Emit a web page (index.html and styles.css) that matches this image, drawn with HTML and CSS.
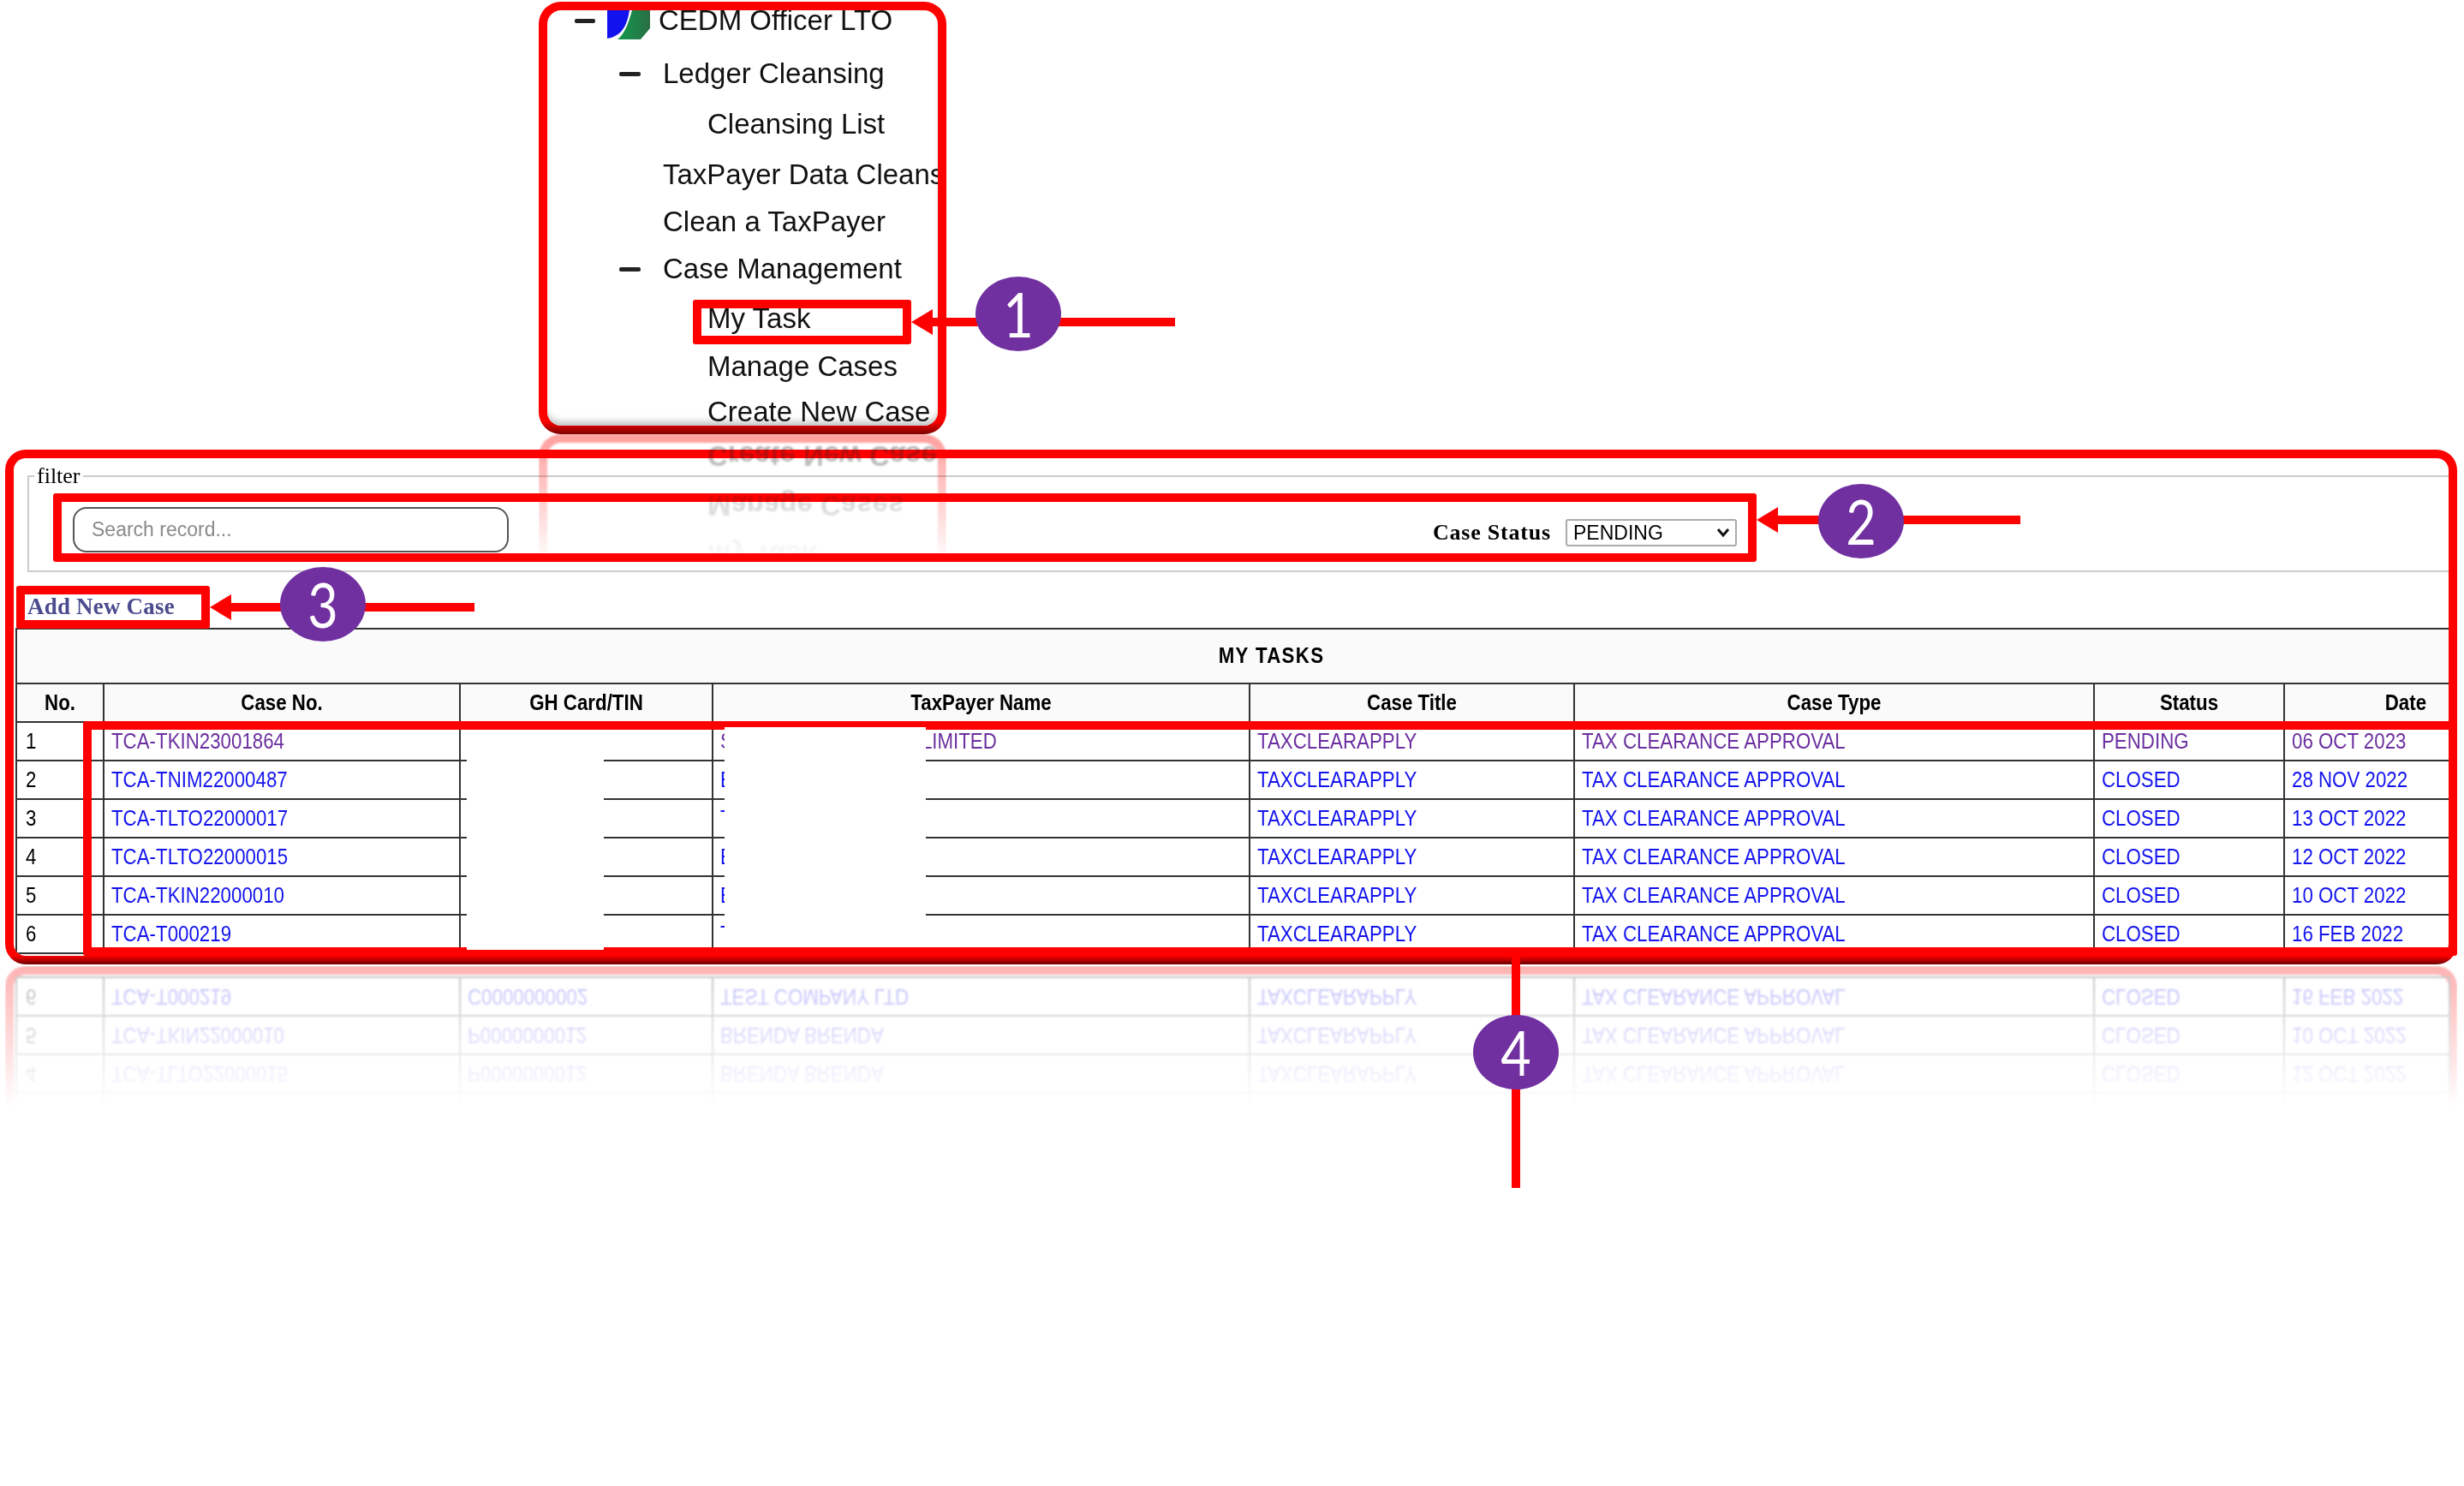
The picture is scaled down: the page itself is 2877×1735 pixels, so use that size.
FILE: index.html
```html
<!DOCTYPE html>
<html lang="en">
<head>
    <meta charset="UTF-8">
    <title>My Tasks</title>
    <link rel="stylesheet" href="styles.css">
</head>
<body>
<div class="stage">
    <div class="menu">
        <ul class="menu-inner">
            <li class="level-0">
                <span class="dash dash-0"></span>
                <svg class="logo" viewBox="0 0 50 35">
                    <defs>
                        <linearGradient id="logo-green" x1="0" y1="0" x2="1" y2="0">
                            <stop offset="0" stop-color="#0f9a4c"/>
                            <stop offset="1" stop-color="#2b6e45"/>
                        </linearGradient>
                    </defs>
                    <path d="M0 0H26C24 12 20 30 0 33Z" fill="#1212ee"/>
                    <path d="M29 0H50V21L39 34H12C20 28 25 15 29 0Z" fill="url(#logo-green)"/>
                </svg>
                CEDM Officer LTO
            </li>
            <li class="level-1"><span class="dash"></span>Ledger Cleansing</li>
            <li class="level-2">Cleansing List</li>
            <li class="level-1-leaf">TaxPayer Data Cleansing</li>
            <li class="level-1-leaf">Clean a TaxPayer</li>
            <li class="level-1"><span class="dash"></span>Case Management</li>
            <li class="level-2">My Task</li>
            <li class="level-2">Manage Cases</li>
            <li class="level-2">Create New Case</li>
        </ul>
    </div>

    <div class="menu-reflection">
        <div class="menu-reflection-inner">
            <div class="mirror-item">My Task</div>
            <div class="mirror-item">Manage Cases</div>
            <div class="mirror-item">Create New Case</div>
        </div>
    </div>

    <section class="panel">
        <div class="panel-inner">
            <fieldset class="filter">
                <legend>filter</legend>
                <div class="filter-row">
                    <input class="search" type="text" placeholder="Search record...">
                    <div class="status-filter">
                        <label for="case-status">Case Status</label>
                        <select id="case-status">
                            <option>PENDING</option>
                            <option>CLOSED</option>
                        </select>
                    </div>
                </div>
            </fieldset>
            <div class="add-row"><a href="#">Add New Case</a></div>
            <table class="tasks">
                <colgroup>
                    <col class="c-no"><col class="c-case"><col class="c-gh"><col class="c-name">
                    <col class="c-title"><col class="c-type"><col class="c-status"><col class="c-date">
                </colgroup>
                <thead>
                    <tr class="title-row"><th colspan="8"><span class="tx">MY TASKS</span></th></tr>
                    <tr class="head-row">
                        <th><span class="tx">No.</span></th>
                        <th><span class="tx">Case No.</span></th>
                        <th><span class="tx">GH Card/TIN</span></th>
                        <th><span class="tx">TaxPayer Name</span></th>
                        <th><span class="tx">Case Title</span></th>
                        <th><span class="tx">Case Type</span></th>
                        <th><span class="tx">Status</span></th>
                        <th class="date-head"><span class="tx">Date</span></th>
                    </tr>
                </thead>
                <tbody>
                    <tr class="visited">
                        <td><span class="tx">1</span></td>
                        <td><a class="tx" href="#">TCA-TKIN23001864</a></td>
                        <td></td>
                        <td><a class="tx" href="#">S<span class="name-gap"></span>LIMITED</a></td>
                        <td><a class="tx" href="#">TAXCLEARAPPLY</a></td>
                        <td><a class="tx" href="#">TAX CLEARANCE APPROVAL</a></td>
                        <td><a class="tx" href="#">PENDING</a></td>
                        <td><a class="tx" href="#">06 OCT 2023</a></td>
                    </tr>
                    <tr>
                        <td><span class="tx">2</span></td>
                        <td><a class="tx" href="#">TCA-TNIM22000487</a></td>
                        <td></td>
                        <td><a class="tx" href="#">B</a></td>
                        <td><a class="tx" href="#">TAXCLEARAPPLY</a></td>
                        <td><a class="tx" href="#">TAX CLEARANCE APPROVAL</a></td>
                        <td><a class="tx" href="#">CLOSED</a></td>
                        <td><a class="tx" href="#">28 NOV 2022</a></td>
                    </tr>
                    <tr>
                        <td><span class="tx">3</span></td>
                        <td><a class="tx" href="#">TCA-TLTO22000017</a></td>
                        <td></td>
                        <td><a class="tx" href="#">T</a></td>
                        <td><a class="tx" href="#">TAXCLEARAPPLY</a></td>
                        <td><a class="tx" href="#">TAX CLEARANCE APPROVAL</a></td>
                        <td><a class="tx" href="#">CLOSED</a></td>
                        <td><a class="tx" href="#">13 OCT 2022</a></td>
                    </tr>
                    <tr>
                        <td><span class="tx">4</span></td>
                        <td><a class="tx" href="#">TCA-TLTO22000015</a></td>
                        <td></td>
                        <td><a class="tx" href="#">B</a></td>
                        <td><a class="tx" href="#">TAXCLEARAPPLY</a></td>
                        <td><a class="tx" href="#">TAX CLEARANCE APPROVAL</a></td>
                        <td><a class="tx" href="#">CLOSED</a></td>
                        <td><a class="tx" href="#">12 OCT 2022</a></td>
                    </tr>
                    <tr>
                        <td><span class="tx">5</span></td>
                        <td><a class="tx" href="#">TCA-TKIN22000010</a></td>
                        <td></td>
                        <td><a class="tx" href="#">B</a></td>
                        <td><a class="tx" href="#">TAXCLEARAPPLY</a></td>
                        <td><a class="tx" href="#">TAX CLEARANCE APPROVAL</a></td>
                        <td><a class="tx" href="#">CLOSED</a></td>
                        <td><a class="tx" href="#">10 OCT 2022</a></td>
                    </tr>
                    <tr>
                        <td><span class="tx">6</span></td>
                        <td><a class="tx" href="#">TCA-T000219</a></td>
                        <td></td>
                        <td><a class="tx" href="#">T</a></td>
                        <td><a class="tx" href="#">TAXCLEARAPPLY</a></td>
                        <td><a class="tx" href="#">TAX CLEARANCE APPROVAL</a></td>
                        <td><a class="tx" href="#">CLOSED</a></td>
                        <td><a class="tx" href="#">16 FEB 2022</a></td>
                    </tr>
                </tbody>
            </table>
        </div>
    </section>

    <!-- mirrored copy under the panel, flipped so the last row comes first -->
    <div class="reflection">
        <div class="reflection-frame">
            <table class="tasks tasks-mirror">
                <colgroup>
                    <col class="c-no"><col class="c-case"><col class="c-gh"><col class="c-name">
                    <col class="c-title"><col class="c-type"><col class="c-status"><col class="c-date">
                </colgroup>
                <tbody>
                    <tr class="row-short"><td></td><td></td><td></td><td></td><td></td><td></td><td></td><td></td></tr>
                    <tr>
                        <td><span class="tx">4</span></td>
                        <td><a class="tx" href="#">TCA-TLTO22000015</a></td>
                        <td><a class="tx" href="#">P0000000012</a></td>
                        <td><a class="tx" href="#">BRENDA BRENDA</a></td>
                        <td><a class="tx" href="#">TAXCLEARAPPLY</a></td>
                        <td><a class="tx" href="#">TAX CLEARANCE APPROVAL</a></td>
                        <td><a class="tx" href="#">CLOSED</a></td>
                        <td><a class="tx" href="#">12 OCT 2022</a></td>
                    </tr>
                    <tr>
                        <td><span class="tx">5</span></td>
                        <td><a class="tx" href="#">TCA-TKIN22000010</a></td>
                        <td><a class="tx" href="#">P0000000012</a></td>
                        <td><a class="tx" href="#">BRENDA BRENDA</a></td>
                        <td><a class="tx" href="#">TAXCLEARAPPLY</a></td>
                        <td><a class="tx" href="#">TAX CLEARANCE APPROVAL</a></td>
                        <td><a class="tx" href="#">CLOSED</a></td>
                        <td><a class="tx" href="#">10 OCT 2022</a></td>
                    </tr>
                    <tr>
                        <td><span class="tx">6</span></td>
                        <td><a class="tx" href="#">TCA-T000219</a></td>
                        <td><a class="tx" href="#">C0000000002</a></td>
                        <td><a class="tx" href="#">TEST COMPANY LTD</a></td>
                        <td><a class="tx" href="#">TAXCLEARAPPLY</a></td>
                        <td><a class="tx" href="#">TAX CLEARANCE APPROVAL</a></td>
                        <td><a class="tx" href="#">CLOSED</a></td>
                        <td><a class="tx" href="#">16 FEB 2022</a></td>
                    </tr>
                </tbody>
            </table>
        </div>
    </div>

    <!-- annotations drawn on top of the screenshot -->
    <div class="box box-task"></div>
    <div class="box box-filter"></div>
    <div class="box box-add"></div>
    <div class="box box-rows"></div>

    <div class="redact redact-gh"></div>
    <div class="redact redact-name"></div>

    <div class="arrow arrow-1"></div>
    <div class="arrow arrow-2"></div>
    <div class="arrow arrow-3"></div>
    <div class="stem"></div>

    <div class="marker marker-1"><span class="digit">1</span></div>
    <div class="marker marker-2"><span class="digit">2</span></div>
    <div class="marker marker-3"><span class="digit">3</span></div>
    <div class="marker marker-4"><span class="digit">4</span></div>
</div>
</body>
</html>
```

FILE: styles.css
```css
body {
    margin: 0;
    background-color: #fff;
    font-family: "Liberation Sans", Arial, sans-serif;
    color: #000;
}

.stage {
    position: relative;
    height: 1735px;
    overflow: hidden;
    padding-top: 2px;
    box-sizing: border-box;
}

/* tree menu */
.menu {
    width: 476px;
    height: 505px;
    margin-left: 629px;
    padding: 10px;
    box-sizing: border-box;
    border-radius: 26px;
    background: linear-gradient(to bottom, #f00 0, #f00 97%, #7a0000 100%);
}

.menu-inner {
    height: 100%;
    margin: 0;
    padding: 0;
    list-style: none;
    overflow: hidden;
    background-color: #fff;
    border-radius: 16px;
    box-shadow: inset 0 -8px 8px -4px #bbb;
    display: grid;
    grid-template-rows: 47px 59px 59px 55px 55px 58px 56px 53px 40px;
    align-content: start;
    font-size: 33px;
    line-height: 54px;
    color: #111;
    white-space: nowrap;
    filter: blur(0.5px);
}

.menu-inner li {
    display: flex;
    align-items: flex-start;
}

.level-0 {
    margin-top: -15px;
    padding-left: 32px;
}

.level-1 {
    padding-left: 84px;
}

.level-1-leaf {
    padding-left: 135px;
}

.level-2 {
    padding-left: 187px;
}

.dash {
    width: 25px;
    height: 5px;
    margin: 25px 26px 0 0;
    background-color: #222;
    border-radius: 2px;
}

.dash-0 {
    width: 24px;
    margin-right: 14px;
}

.logo {
    width: 50px;
    height: 35px;
    margin: 15px 10px 0 0;
}

.menu-reflection {
    position: absolute;
    left: 629px;
    top: 507px;
    width: 476px;
    height: 150px;
    transform: scaleY(-1);
    -webkit-mask-image: linear-gradient(to bottom, transparent 0, rgba(0, 0, 0, 0.38) 100%);
    mask-image: linear-gradient(to bottom, transparent 0, rgba(0, 0, 0, 0.38) 100%);
    filter: blur(1px);
    z-index: 2;
}

.menu-reflection-inner {
    height: 100%;
    box-sizing: border-box;
    border: 10px solid #f00;
    border-top: none;
    border-radius: 0 0 26px 26px;
    padding: 0 0 0 187px;
    font-size: 33px;
    font-weight: bold;
    display: flex;
    flex-direction: column;
    justify-content: flex-end;
    color: #222;
}

.mirror-item {
    height: 58px;
    line-height: 58px;
    white-space: nowrap;
    position: relative;
    top: 14px;
}

/* main panel */
.panel {
    width: 2863px;
    height: 601px;
    margin: 18px 0 0 6px;
    padding: 10px 10px 10px;
    box-sizing: border-box;
    border-radius: 24px;
    background: linear-gradient(to bottom, #f00 0, #f00 98.3%, #6e0000 100%);
}

.panel-inner {
    height: 100%;
    background-color: #fff;
    border-radius: 14px;
    overflow: hidden;
    filter: blur(0.45px);
}

.filter {
    margin: 6px 0 0 16px;
    padding: 0 831px 0 51px;
    border: 2px solid #ccc;
    border-right: none;
}

.filter legend {
    margin-left: -45px;
    padding: 0 3px;
    font-family: "Liberation Serif", "Times New Roman", serif;
    font-size: 26px;
    line-height: 30px;
}

.filter-row {
    display: flex;
    justify-content: space-between;
    height: 53px;
    margin: 21px 0 21px;
}

.search {
    width: 509px;
    height: 53px;
    padding: 0 20px;
    box-sizing: border-box;
    border: 2px solid #555;
    border-radius: 16px;
    font-family: "Liberation Sans", Arial, sans-serif;
    font-size: 23px;
}

.search::placeholder {
    color: #8a8a8a;
}

.status-filter {
    display: flex;
    align-items: center;
    gap: 17px;
    margin-top: 7px;
}

.status-filter label {
    font-family: "Liberation Serif", "Times New Roman", serif;
    font-size: 26px;
    font-weight: bold;
    letter-spacing: 0.8px;
}

.status-filter select {
    width: 200px;
    height: 32px;
    padding-left: 7px;
    border: 2px solid #aaa;
    border-radius: 3px;
    background: #fff url("data:image/svg+xml,%3Csvg xmlns='http://www.w3.org/2000/svg' viewBox='0 0 16 12'%3E%3Cpath d='M2 2l6 7 6-7' fill='none' stroke='%23111' stroke-width='3'/%3E%3C/svg%3E") no-repeat right 6px center / 16px 12px;
    appearance: none;
    font-family: "Liberation Sans", Arial, sans-serif;
    font-size: 23px;
}

.add-row {
    height: 65px;
    padding-left: 16px;
    line-height: 80px;
    font-family: "Liberation Serif", "Times New Roman", serif;
    font-size: 27px;
    font-weight: bold;
    letter-spacing: 0.2px;
}

.add-row a {
    color: #4b4b8f;
    text-decoration: none;
}

/* tasks table */
.tasks {
    width: 2841px;
    margin-left: 2px;
    table-layout: fixed;
    border-collapse: collapse;
    font-size: 22.3px;
}

.c-no { width: 102px; }
.c-case { width: 416px; }
.c-gh { width: 295px; }
.c-name { width: 627px; }
.c-title { width: 379px; }
.c-type { width: 607px; }
.c-status { width: 222px; }
.c-date { width: 193px; }

.tasks th,
.tasks td {
    height: 45px;
    padding: 0 8px;
    box-sizing: border-box;
    border: 2px solid #333;
    white-space: nowrap;
    overflow: hidden;
}

.tasks td:first-child {
    padding-left: 10px;
}

.tasks th {
    background-color: #fafafa;
    text-align: center;
}

.title-row th {
    height: 64px;
    padding-left: 98px;
    letter-spacing: 1.3px;
}

.tasks .date-head {
    padding-right: 26px;
    text-align: right;
}

.tasks a {
    color: #1414ee;
    text-decoration: none;
}

.tasks .visited a {
    color: #6b2fa0;
}

/* source screenshot is stretched a little vertically */
.tx {
    display: inline-block;
    transform: scaleY(1.14);
}

.name-gap {
    display: inline-block;
    width: 220px;
}

/* reflection below the panel */
.reflection {
    width: 2863px;
    height: 165px;
    margin: 2px 0 0 6px;
    transform: scaleY(-1);
    -webkit-mask-image: linear-gradient(to bottom, transparent 0, rgba(0, 0, 0, 0.3) 100%);
    mask-image: linear-gradient(to bottom, transparent 0, rgba(0, 0, 0, 0.3) 100%);
    filter: blur(0.8px);
}

.reflection-frame {
    height: 100%;
    box-sizing: border-box;
    padding-bottom: 2px;
    border: 10px solid #f00;
    border-top: none;
    border-radius: 0 0 24px 24px;
    display: flex;
    flex-direction: column;
    justify-content: flex-end;
}

.tasks-mirror {
    margin-left: 2px;
}

.tasks-mirror .row-short td {
    height: 12px;
    border-top: none;
}

/* annotations */
.box {
    position: absolute;
    box-sizing: border-box;
    border: 10px solid #f00;
    border-radius: 3px;
}

.box-task { left: 809px; top: 350px; width: 255px; height: 52px; }
.box-filter { left: 62px; top: 576px; width: 1989px; height: 80px; }
.box-add { left: 19px; top: 684px; width: 226px; height: 50px; }
.box-rows { left: 97px; top: 842px; width: 2772px; height: 274px; }

.redact {
    position: absolute;
    background-color: #fff;
}

.redact-gh { left: 545px; top: 852px; width: 160px; height: 257px; }
.redact-name { left: 846px; top: 849px; width: 235px; height: 256px; }

.arrow {
    position: absolute;
    height: 10px;
    background-color: #f00;
    background-clip: content-box;
    padding-left: 20px;
}

.arrow::before {
    content: "";
    position: absolute;
    left: 0;
    top: -10px;
    border-style: solid;
    border-width: 15px 25px 15px 0;
    border-color: transparent #f00 transparent transparent;
}

.arrow-1 { left: 1064px; top: 371px; width: 288px; }
.arrow-2 { left: 2051px; top: 602px; width: 288px; }
.arrow-3 { left: 245px; top: 704px; width: 289px; }

.stem {
    position: absolute;
    left: 1765px;
    top: 1116px;
    width: 10px;
    height: 271px;
    background-color: #f00;
}

.marker {
    position: absolute;
    width: 100px;
    height: 87px;
    border-radius: 50%;
    background-color: #7030a0;
    color: #fff;
    font-family: Lato, "Open Sans", sans-serif;
    font-size: 72px;
    line-height: 87px;
    text-align: center;
}

.digit {
    display: inline-block;
    transform: scaleX(0.85);
}

.marker-1 { left: 1139px; top: 323px; }
.marker-2 { left: 2123px; top: 565px; }
.marker-3 { left: 327px; top: 662px; }
.marker-4 { left: 1720px; top: 1185px; }
```
